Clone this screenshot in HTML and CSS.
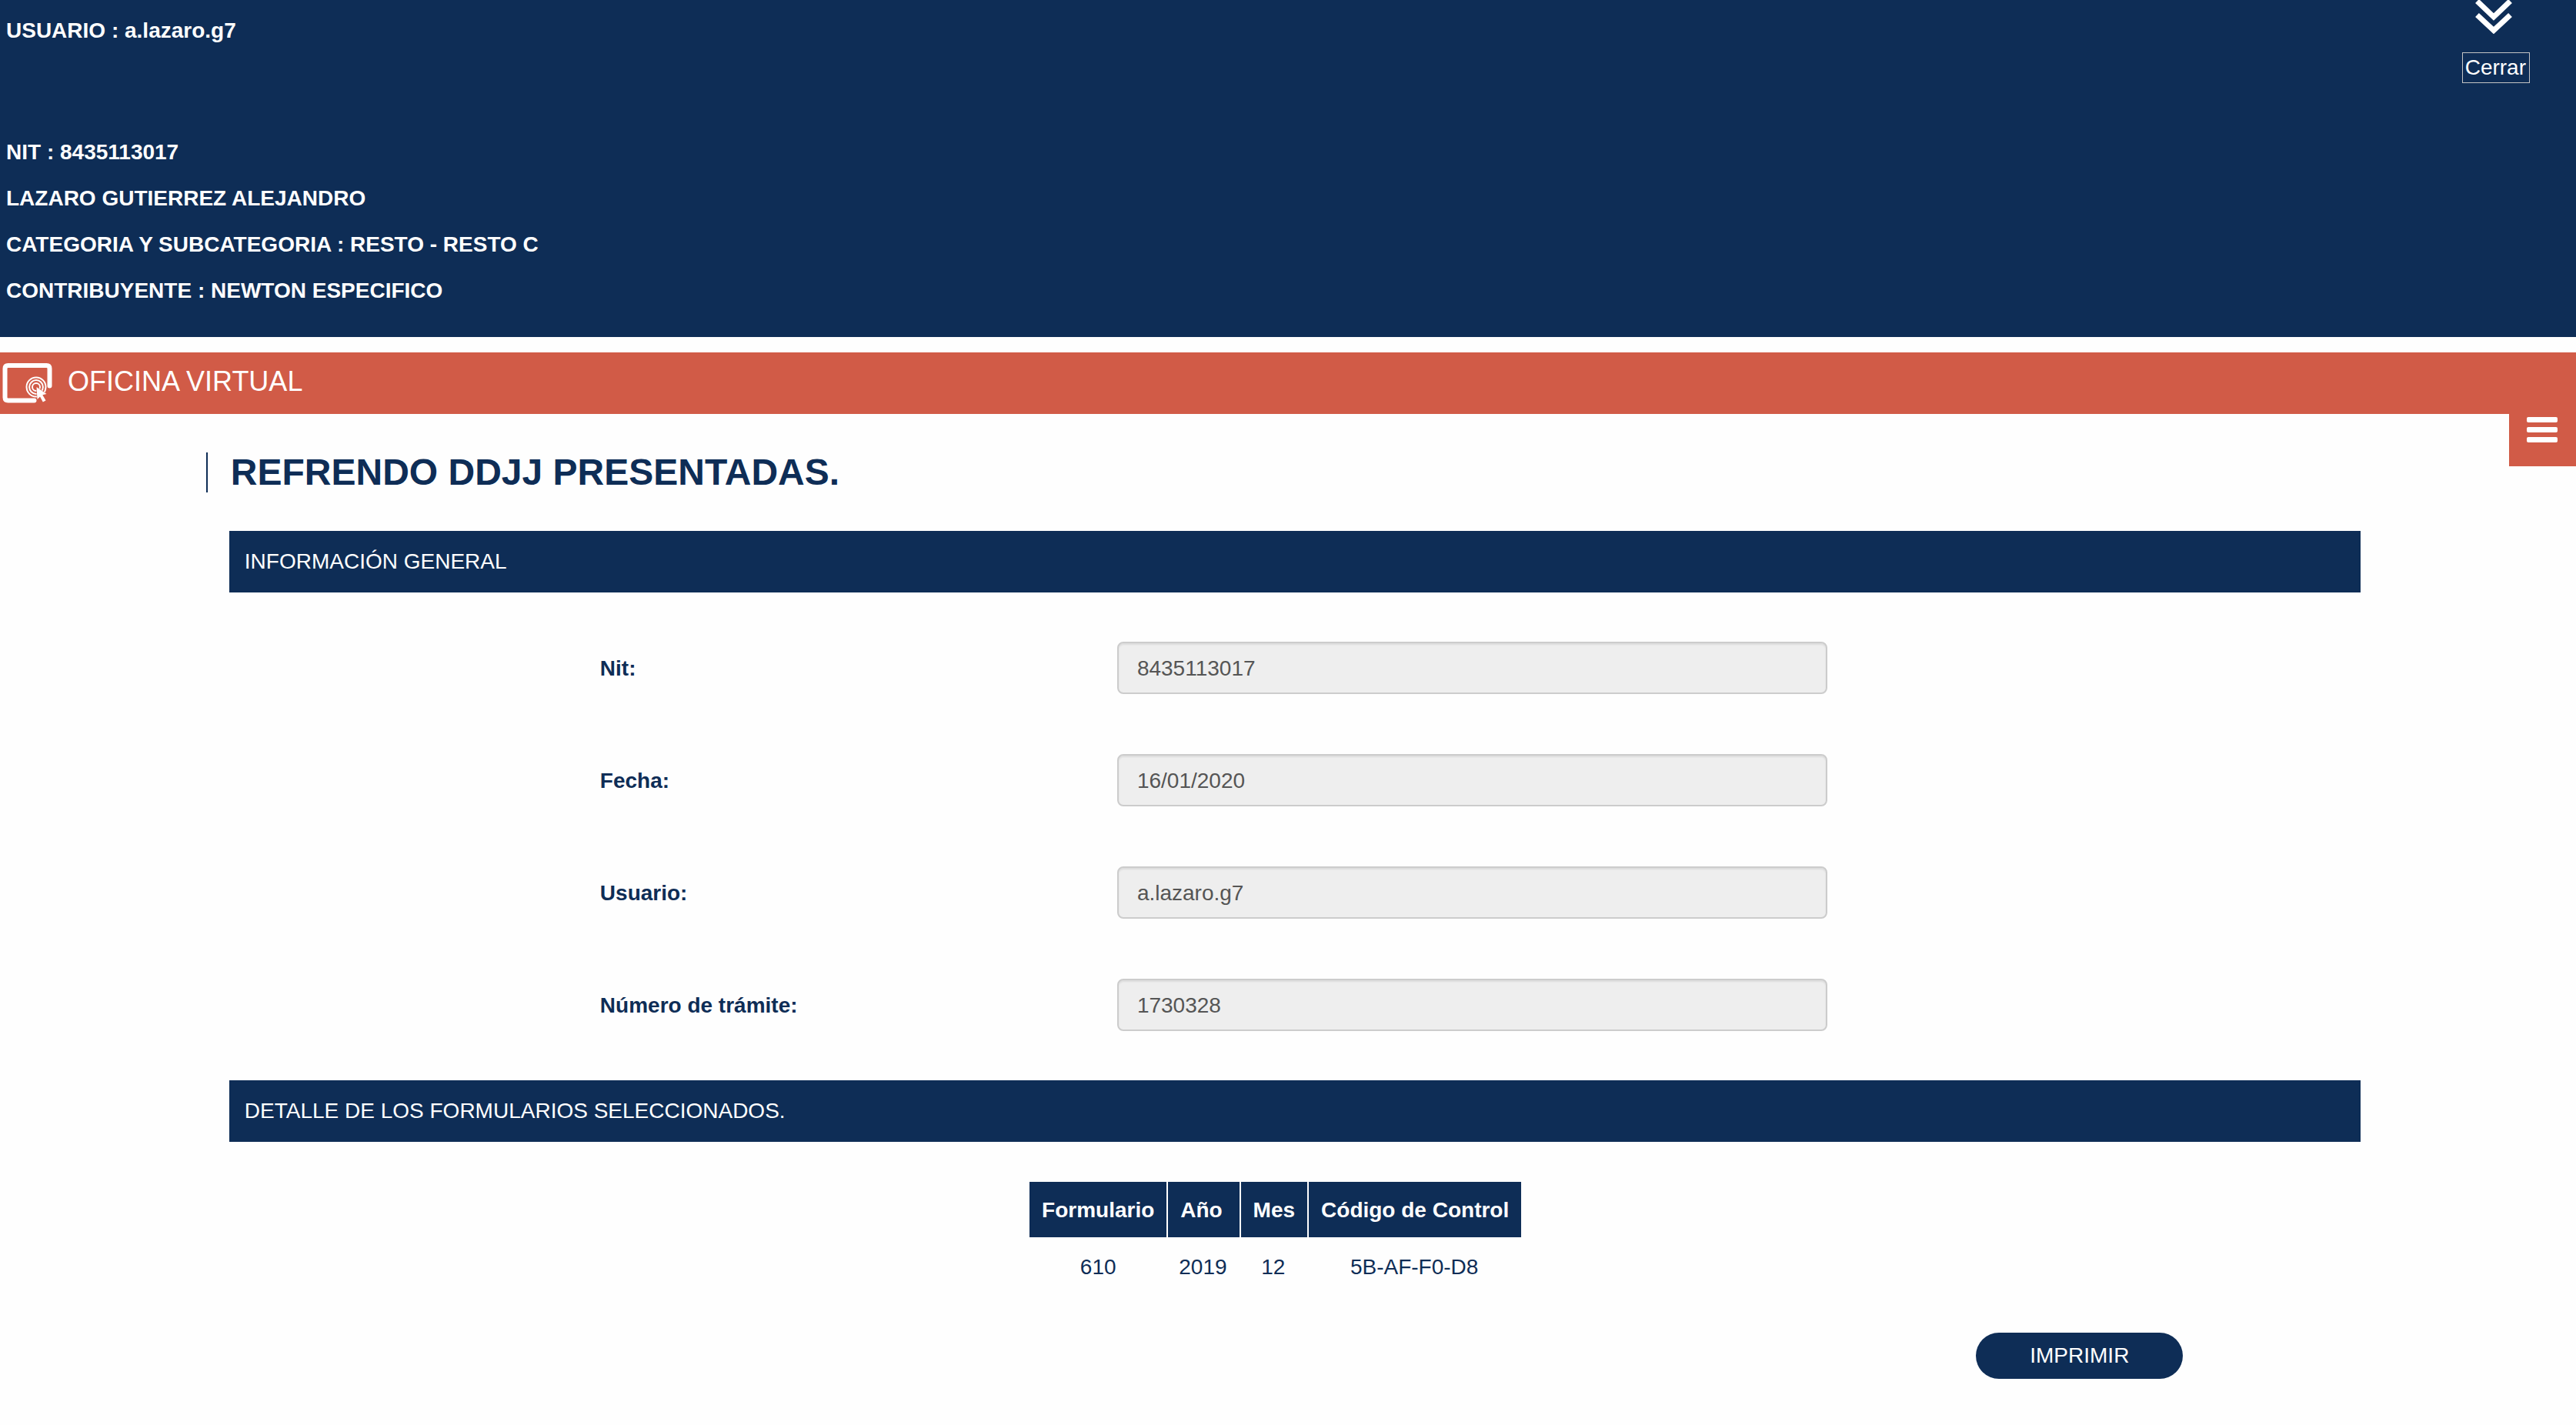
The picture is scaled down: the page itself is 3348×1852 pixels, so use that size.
FILE: index.html
```html
<!DOCTYPE html>
<html lang="es">
<head>
  <meta charset="utf-8">
  <meta name="viewport" content="width=device-width, initial-scale=1">
  <title>Oficina Virtual</title>
  <link rel="stylesheet" href="styles.css">
</head>
<body>
  <header class="account">
    <div class="account-info">
      <p class="account-user">USUARIO : a.lazaro.g7</p>
      <p>NIT : 8435113017</p>
      <p>LAZARO GUTIERREZ ALEJANDRO</p>
      <p>CATEGORIA Y SUBCATEGORIA : RESTO - RESTO C</p>
      <p>CONTRIBUYENTE : NEWTON ESPECIFICO</p>
    </div>
    <div class="session">
      <svg class="chevrons" viewBox="0 0 48 44" aria-hidden="true">
        <path d="M2.500 1.500L24 22L45.500 1.500M2.500 19.500L24 39.500L45.500 19.500"/>
      </svg>
      <a class="close-link" href="#">Cerrar</a>
    </div>
  </header>

  <nav class="office-bar">
    <svg class="office-icon" viewBox="0 0 70 56" aria-hidden="true">
      <path class="screen" d="M64.500 31.500V9Q64.500 5 60.500 5H10.500Q6.500 5 6.500 9V46.500Q6.500 50.500 10.500 50.500H44.500"/>
      <circle class="ring" cx="47" cy="33" r="12.500"/>
      <circle class="ring" cx="47" cy="33" r="8.900"/>
      <circle class="ring" cx="47" cy="33" r="5"/>
      <path class="pointer" d="M47.500 33L60.500 42L55.300 43.200L59.500 50.500L55.800 52.500L52 45.500L48.500 49Z"/>
    </svg>
    <span>OFICINA VIRTUAL</span>
    <button class="menu-button" type="button" aria-label="Menú">
      <svg class="menu-icon" viewBox="0 0 40 34" aria-hidden="true">
        <rect width="40" height="7" rx="2"/>
        <rect y="13" width="40" height="7" rx="2"/>
        <rect y="26" width="40" height="7" rx="2"/>
      </svg>
    </button>
  </nav>

  <main class="page">
    <h1 class="page-title">REFRENDO DDJJ PRESENTADAS.</h1>
    <div class="sections">
      <h2 class="section-title">INFORMACIÓN GENERAL</h2>
      <form class="details">
        <div class="field">
          <label for="nit">Nit:</label>
          <input id="nit" type="text" value="8435113017" readonly>
        </div>
        <div class="field">
          <label for="fecha">Fecha:</label>
          <input id="fecha" type="text" value="16/01/2020" readonly>
        </div>
        <div class="field">
          <label for="usuario">Usuario:</label>
          <input id="usuario" type="text" value="a.lazaro.g7" readonly>
        </div>
        <div class="field">
          <label for="tramite">Número de trámite:</label>
          <input id="tramite" type="text" value="1730328" readonly>
        </div>
      </form>

      <h2 class="section-title">DETALLE DE LOS FORMULARIOS SELECCIONADOS.</h2>
      <table class="forms-table">
        <thead>
          <tr><th>Formulario</th><th>Año</th><th>Mes</th><th>Código de Control</th></tr>
        </thead>
        <tbody>
          <tr><td>610</td><td>2019</td><td>12</td><td>5B-AF-F0-D8</td></tr>
        </tbody>
      </table>
      <div class="actions">
        <button class="print-button" type="button">IMPRIMIR</button>
      </div>
    </div>
  </main>
</body>
</html>
```
FILE: styles.css
```css
:root {
  --navy: #0e2d56;
  --coral: #d15b47;
  --paper: #fefefe;
}

* {
  box-sizing: border-box;
}

body {
  margin: 0;
  background: var(--paper);
  color: var(--navy);
  font: 28px/40px "Liberation Sans", Arial, sans-serif;
}

/* Account header */
.account {
  display: flex;
  justify-content: space-between;
  padding: 0 60px 40px 8px;
  background: var(--navy);
  color: #fff;
}

.account-info {
  display: flex;
  flex-direction: column;
  gap: 20px;
  padding-top: 20px;
  font-weight: bold;
}

.account-info p {
  margin: 0;
}

.account-info .account-user {
  margin-bottom: 98px;
}

.session {
  display: flex;
  flex-direction: column;
  align-items: center;
  gap: 24px;
}

.chevrons {
  width: 48px;
  height: 44px;
  margin-right: 6px;
  fill: none;
  stroke: #fff;
  stroke-width: 7;
}

.close-link {
  padding: 0 4px 0 3px;
  border: 1px solid #c4c4c4;
  color: #fff;
  line-height: 38px;
  text-decoration: none;
}

/* Office bar */
.office-bar {
  position: relative;
  display: flex;
  align-items: flex-start;
  gap: 18px;
  height: 80px;
  margin-top: 20px;
  padding-top: 12px;
  background: var(--coral);
  color: #fff;
  font-size: 36px;
  line-height: 52px;
}

.office-icon {
  width: 70px;
  height: 56px;
}

.screen {
  fill: none;
  stroke: #fff;
  stroke-width: 6;
  stroke-linecap: round;
}

.ring {
  fill: none;
  stroke: #fff;
  stroke-width: 2;
}

.pointer {
  fill: #fff;
  stroke: var(--coral);
  stroke-width: 1;
  paint-order: stroke;
}

.menu-button {
  position: absolute;
  top: 100%;
  right: 0;
  width: 87px;
  height: 68px;
  padding: 4px 24px 30px 23px;
  border: 0;
  background: var(--coral);
}

.menu-icon {
  display: block;
  width: 40px;
  height: 34px;
  fill: #fff;
}

/* Page content */
.page {
  padding: 50px 8.36% 60px 8%;
}

.page-title {
  margin: 0 0 50px;
  padding-left: 30px;
  border-left: 2px solid var(--navy);
  font-size: 48px;
  line-height: 52px;
}

.sections {
  padding-left: 30px;
}

.section-title {
  margin: 0;
  padding: 20px;
  background: var(--navy);
  color: #fff;
  font-size: 28px;
  font-weight: normal;
  line-height: 40px;
}

.details {
  display: grid;
  gap: 78px;
  padding: 64px 0;
}

.field {
  display: grid;
  grid-template-columns: 672fr 923fr 693fr;
  align-items: center;
  padding-left: 17.4%;
}

.field label {
  padding-top: 2px;
  font-weight: bold;
}

.field input {
  width: 100%;
  height: 68px;
  padding: 2px 24px 0;
  border: 2px solid #ccc;
  border-radius: 8px;
  background: #eee;
  box-shadow: inset 0 2px 2px rgba(0, 0, 0, .075);
  color: #555;
  font: inherit;
}

.forms-table {
  margin: 52px 0 0 37.55%;
  border-collapse: separate;
  border-spacing: 0;
  text-align: center;
}

.forms-table th {
  padding: 17px 16px 15px;
  border-left: 2px solid var(--paper);
  background: var(--navy);
  color: #fff;
  text-align: left;
}

.forms-table th:first-child {
  border-left: 0;
}

.forms-table td {
  padding: 19px 16px 15px;
}

.actions {
  display: flex;
  justify-content: flex-end;
  margin-top: 50px;
  padding-right: 8.33%;
}

.print-button {
  height: 60px;
  padding: 0 70px;
  border: 0;
  border-radius: 30px;
  background: var(--navy);
  color: #fff;
  font: inherit;
}
```
